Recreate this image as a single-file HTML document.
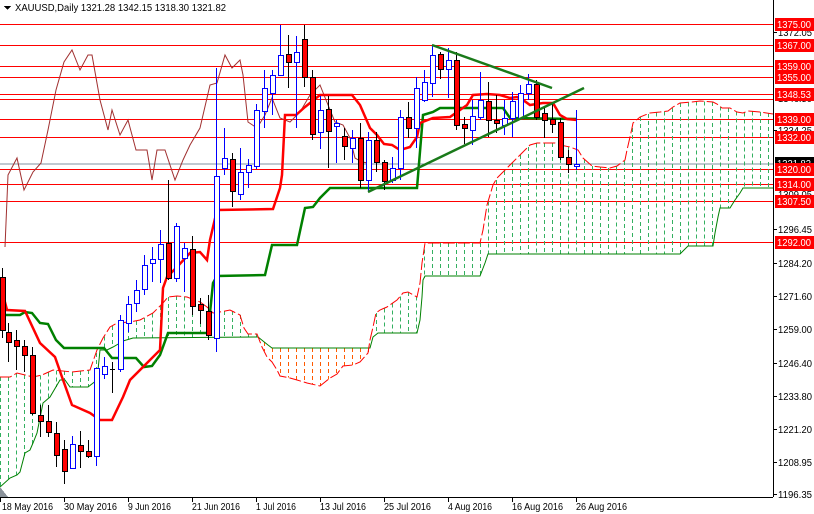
<!DOCTYPE html>
<html><head><meta charset="utf-8"><style>
html,body{margin:0;padding:0;background:#fff;width:814px;height:514px;overflow:hidden;font-family:"Liberation Sans",sans-serif}
svg{position:absolute;left:0;top:0}
text{font-family:"Liberation Sans",sans-serif;font-size:10px}
</style></head><body>
<svg id="s" width="814" height="514" xmlns="http://www.w3.org/2000/svg" shape-rendering="crispEdges">
<g id="grid" stroke="#ff0000" stroke-width="1"></g>
<line x1="0" y1="164" x2="773" y2="164" stroke="#8090a0"/>
<g id="hatch"></g>
<g id="lines" fill="none" shape-rendering="auto"></g>
<g id="candles"></g>
<g id="tl" shape-rendering="auto"></g>
<line x1="773.5" y1="0" x2="773.5" y2="497" stroke="#000"/>
<line x1="0" y1="497.5" x2="773" y2="497.5" stroke="#000"/>
<polygon points="0,487 0,497 8,497" fill="#8a929a"/>
<g id="ticks" stroke="#000"></g>
<polygon points="4,6 11,6 7.5,10" fill="#000"/>
<text x="15" y="11" fill="#000" textLength="211" lengthAdjust="spacingAndGlyphs">XAUUSD,Daily  1321.28 1342.15 1318.30 1321.82</text>
<g fill="#000">
<text x="2" y="510" textLength="51" lengthAdjust="spacingAndGlyphs">18 May 2016</text>
<text x="64" y="510" textLength="53" lengthAdjust="spacingAndGlyphs">30 May 2016</text>
<text x="128" y="510" textLength="43" lengthAdjust="spacingAndGlyphs">9 Jun 2016</text>
<text x="192" y="510" textLength="48" lengthAdjust="spacingAndGlyphs">21 Jun 2016</text>
<text x="256" y="510" textLength="40" lengthAdjust="spacingAndGlyphs">1 Jul 2016</text>
<text x="320" y="510" textLength="46" lengthAdjust="spacingAndGlyphs">13 Jul 2016</text>
<text x="384" y="510" textLength="47" lengthAdjust="spacingAndGlyphs">25 Jul 2016</text>
<text x="448" y="510" textLength="44" lengthAdjust="spacingAndGlyphs">4 Aug 2016</text>
<text x="512" y="510" textLength="51" lengthAdjust="spacingAndGlyphs">16 Aug 2016</text>
<text x="576" y="510" textLength="51" lengthAdjust="spacingAndGlyphs">26 Aug 2016</text>
</g>
<g id="axis" fill="#000"></g>
<rect x="775" y="157" width="39" height="13" fill="#000"/>
<text x="777" y="167" fill="#fff" textLength="34" lengthAdjust="spacingAndGlyphs">1321.82</text>
<g id="labels"></g>
</svg>
<script>
var NS="http://www.w3.org/2000/svg";
function el(p,t,a){var e=document.createElementNS(NS,t);for(var k in a)e.setAttribute(k,a[k]);document.getElementById(p).appendChild(e);return e;}
</script>
<svg width="0" height="0" style="position:absolute">
<text>1372.05 1334.25 1296.45 1284.20 1271.60 1259.00 1246.40 1233.80 1221.20 1208.95 1196.35 1346.50 1309.05 1375.00 1367.00 1359.00 1355.00 1348.53 1339.00 1332.00 1320.00 1314.00 1307.50 1292.00</text>
</svg>
<script>
[[36,"1372.05"],[134,"1334.25"],[233,"1296.45"],[267,"1284.20"],[300,"1271.60"],[333,"1259.00"],[367,"1246.40"],[400,"1233.80"],[433,"1221.20"],[466,"1208.95"],[498,"1196.35"],[102,"1346.50"],[198,"1309.05"]].forEach(function(a){var t=el("axis","text",{x:778,y:a[0],textLength:34,lengthAdjust:"spacingAndGlyphs"});t.textContent=a[1];});
var lv=[[24,"1375.00"],[45,"1367.00"],[66,"1359.00"],[77,"1355.00"],[94,"1348.53"],[99,null],[119,"1339.00"],[137,"1332.00"],[169,"1320.00"],[184,"1314.00"],[201,"1307.50"],[242,"1292.00"]];
lv.forEach(function(l){el("grid","line",{x1:0,x2:773,y1:l[0]+0.5,y2:l[0]+0.5});});
lv.forEach(function(l){if(!l[1])return;el("labels","rect",{x:775,y:l[0]-6,width:39,height:13,fill:"#ff0000"});var t=el("labels","text",{x:777,y:l[0]+4,fill:"#fff",textLength:34,lengthAdjust:"spacingAndGlyphs"});t.textContent=l[1];});
[32,130,229,263,296,329,363,396,429,462,494].forEach(function(y){el("ticks","line",{x1:773,x2:777,y1:y+0.5,y2:y+0.5});});
[0,64,128,192,256,320,384,448,512,576].forEach(function(x){el("ticks","line",{x1:x+0.5,x2:x+0.5,y1:497,y2:502});});
var A=[[0,377],[10,377],[17,373],[33,377],[42,375],[53,370],[72,372],[90,370],[97,350],[103,338],[110,327],[117,323],[130,322],[140,320],[153,313],[163,303],[168,297],[177,296],[187,297],[200,302],[207,307],[213,313],[220,312],[230,310],[240,315],[244,328],[248,334],[257,334],[262,347],[267,357],[272,362],[277,370],[280,376],[290,378],[297,380],[307,383],[320,386],[330,378],[337,374],[343,366],[353,365],[360,362],[368,353],[370,340],[373,327],[376,313],[380,310],[387,307],[397,300],[403,293],[408,292],[417,297],[420,283],[422,263],[425,243],[480,243],[483,230],[487,205],[493,185],[497,178],[510,165],[520,155],[530,145],[537,143],[555,143],[560,145],[570,147],[578,150],[583,158],[592,166],[600,167],[610,168],[617,166],[625,160],[627,150],[630,137],[632,128],[633,123],[640,117],[650,113],[660,112],[668,111],[673,107],[680,103],[692,102],[700,101],[713,102],[717,104],[722,108],[730,108],[737,112],[743,113],[748,111],[760,112],[773,114]];
var B=[[0,487],[10,478],[17,475],[20,472],[25,453],[30,450],[33,443],[37,433],[43,403],[50,397],[60,380],[65,380],[70,387],[88,387],[97,380],[100,350],[107,350],[113,347],[120,343],[123,341],[133,338],[258,337],[268,345],[272,348],[370,348],[373,337],[378,333],[417,333],[420,320],[422,297],[423,280],[425,276],[480,276],[485,263],[488,254],[680,254],[688,246],[713,246],[715,233],[718,217],[720,208],[730,208],[735,200],[740,193],[743,188],[773,188]];
function at(P,x){for(var i=1;i<P.length;i++){if(x<=P[i][0]){var a=P[i-1],b=P[i];var t=(x-a[0])/((b[0]-a[0])||1);return a[1]+t*(b[1]-a[1]);}}return P[P.length-1][1];}
for(var x=0;x<=772;x+=8){var a=at(A,x),b=at(B,x);var g=a<=b;el("hatch","line",{x1:x+0.5,x2:x+0.5,y1:Math.min(a,b),y2:Math.max(a,b),stroke:g?"#33b060":"#ff5a00","stroke-dasharray":"4,3"});}
function pl(P,c,w,d){var a={points:P.map(function(p){return p.join(",")}).join(" "),stroke:c,"stroke-width":w};if(d)a["stroke-dasharray"]=d;el("lines","polyline",a);}
pl(B,"#008000",1);
pl(A,"#ff0000",1,"12,3");
pl([[5,247],[8,175],[17,158],[24,190],[33,172],[41,163],[48,130],[56,90],[64,62],[72,50],[80,70],[88,55],[92,55],[100,100],[108,130],[112,110],[120,135],[128,120],[136,150],[147,150],[152,180],[157,150],[165,150],[175,180],[183,160],[190,145],[200,128],[210,85],[217,83],[225,55],[232,68],[240,60],[243,75],[248,122],[257,128],[265,115],[272,98],[280,118],[290,122],[300,112],[310,95],[320,85],[326,100],[335,122],[343,125],[350,138],[355,158],[362,162],[368,163]],"#a03030",1);
pl([[0,315],[20,315],[25,312],[32,313],[40,323],[48,324],[56,340],[64,348],[104,348],[112,358],[136,358],[144,367],[152,366],[160,355],[168,333],[208,333],[213,283],[217,276],[265,275],[272,245],[297,245],[305,208],[313,207],[320,198],[330,188],[417,188],[423,115],[433,112],[440,108],[503,108],[510,118],[577,119]],"#008000",2.5);
pl([[0,283],[7,310],[25,311],[40,343],[55,357],[62,377],[72,405],[90,413],[100,420],[112,420],[123,397],[130,380],[150,360],[160,350],[163,288],[167,277],[177,267],[190,253],[200,252],[207,260],[210,240],[217,210],[273,209],[280,188],[282,175],[285,115],[296,115],[305,107],[320,95],[352,95],[360,105],[370,128],[377,135],[384,144],[392,145],[400,150],[410,147],[417,137],[420,123],[433,118],[450,117],[467,105],[473,95],[487,94],[500,95],[510,98],[517,97],[523,100],[530,105],[543,103],[553,103],[560,115],[567,119],[577,120]],"#ff0000",2.5);
var C=[[2,268,277,330,338,'r'],[8,323,332,342,362,'r'],[16,330,340,346,370,'r'],[24,340,346,355,372,'r'],[32,347,355,413,415,'r'],[40,405,415,421,437,'r'],[48,405,421,432,437,'r'],[56,422,433,455,467,'r'],[64,440,449,471,484,'r'],[72,436,444,468,468,'b'],[80,431,445,451,468,'r'],[88,440,451,456,458,'r'],[96,368,368,456,466,'b'],[104,357,366,374,379,'b'],[112,362,369,370,393,'k'],[120,315,320,369,372,'b'],[128,296,304,323,332,'b'],[136,280,290,303,312,'b'],[144,255,265,289,295,'b'],[152,247,259,263,282,'b'],[160,230,244,259,283,'b'],[168,180,243,278,280,'r'],[176,223,226,278,282,'b'],[184,243,248,258,292,'b'],[192,236,249,306,315,'r'],[200,298,304,310,324,'r'],[208,295,311,335,340,'r'],[216,68,176,338,352,'b'],[224,128,158,168,175,'b'],[232,153,159,191,207,'r'],[240,148,172,194,200,'b'],[248,159,165,172,188,'b'],[256,104,110,166,169,'b'],[264,70,88,111,128,'b'],[272,70,75,93,115,'b'],[280,25,55,75,75,'b'],[288,35,54,62,88,'r'],[296,36,52,62,128,'b'],[304,25,39,77,87,'r'],[312,70,77,134,140,'r'],[320,96,110,132,149,'b'],[328,96,109,131,168,'r'],[336,120,123,126,163,'b'],[344,128,136,146,160,'r'],[352,130,138,148,163,'b'],[360,123,138,180,188,'r'],[368,132,140,180,192,'b'],[376,132,140,162,172,'r'],[384,160,162,181,190,'r'],[392,157,168,180,183,'b'],[400,110,117,168,180,'b'],[408,102,117,128,138,'r'],[416,77,88,128,148,'b'],[424,70,82,100,102,'b'],[432,45,55,83,97,'b'],[440,52,54,69,79,'r'],[448,48,60,69,98,'b'],[456,52,60,125,130,'r'],[464,117,124,128,144,'r'],[472,100,116,130,145,'b'],[480,72,100,117,120,'b'],[488,82,101,120,137,'r'],[496,95,120,123,133,'r'],[504,100,118,125,135,'b'],[512,92,101,118,137,'b'],[520,85,93,118,120,'b'],[528,74,84,93,100,'b'],[536,80,84,117,120,'r'],[544,108,113,120,138,'r'],[552,103,119,124,133,'r'],[560,118,122,157,160,'r'],[568,150,157,164,173,'r'],[576,110,164,166,170,'b']];
C.forEach(function(c){var x=c[0],col=c[5]=='b'?"#0000ff":"#000";
el("candles","line",{x1:x+0.5,x2:x+0.5,y1:c[1],y2:c[4],stroke:col});
if(c[5]=='k'){el("candles","line",{x1:x-2,x2:x+3,y1:c[2]+0.5,y2:c[2]+0.5,stroke:"#000"});return;}
el("candles","rect",{x:x-2+0.5,y:c[2]+0.5,width:5,height:Math.max(1,c[3]-c[2]),fill:c[5]=='b'?"#fff":"#ff0000",stroke:col});});
el("tl","line",{x1:432,y1:45,x2:552,y2:88,stroke:"#1a7a1a","stroke-width":2.5});
el("tl","line",{x1:368,y1:192,x2:584,y2:88,stroke:"#1a7a1a","stroke-width":2.5});
</script>
</body></html>
